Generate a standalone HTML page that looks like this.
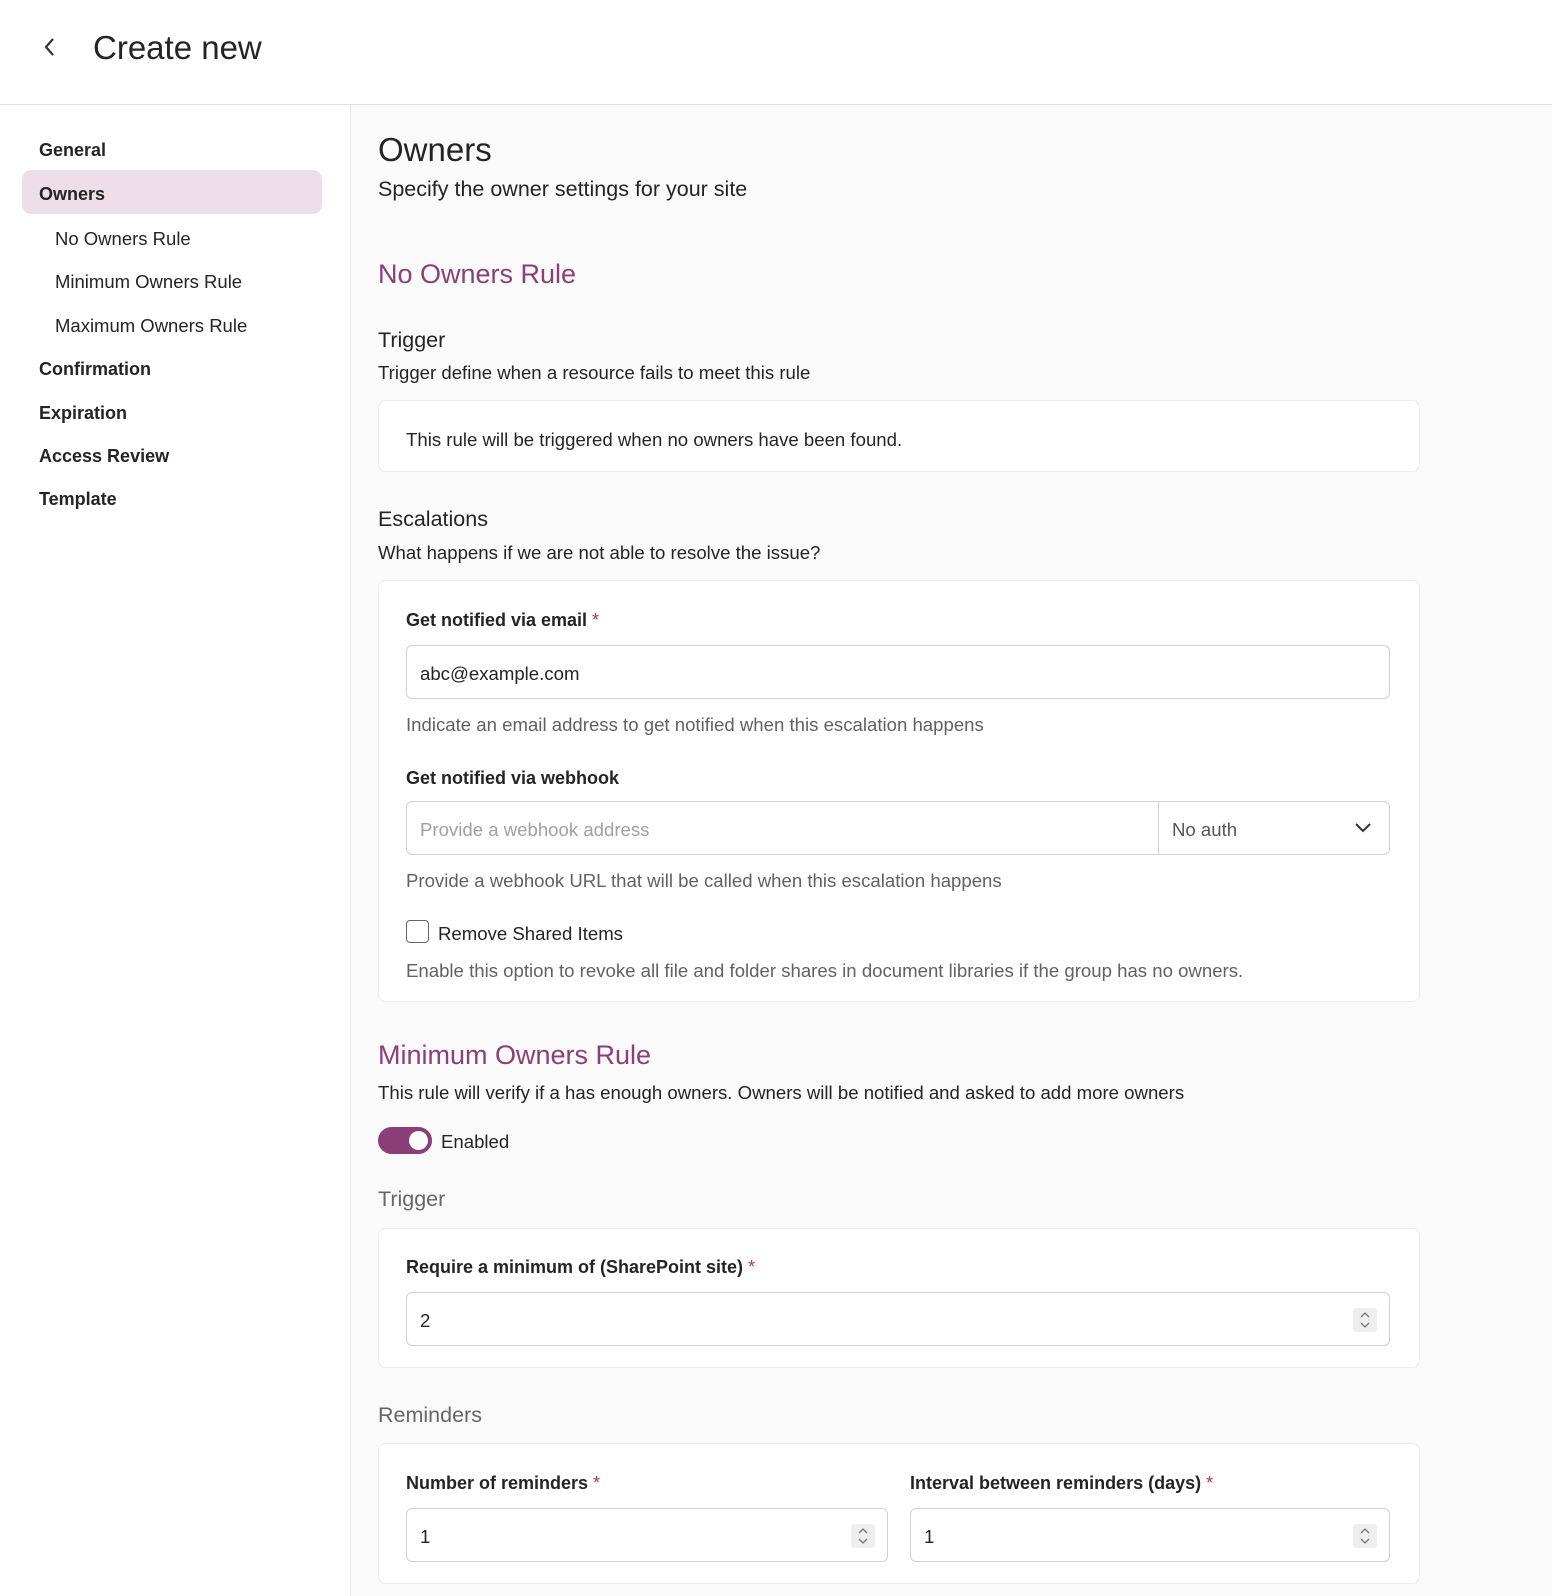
<!DOCTYPE html>
<html><head><style>
*{box-sizing:border-box;margin:0;padding:0}
body{width:1552px;height:1596px;overflow:hidden;background:#fafafa;font-family:"Liberation Sans",sans-serif;color:#242424;position:relative}
.a{position:absolute;white-space:nowrap}
.hdr{position:absolute;left:0;top:0;width:1552px;height:105px;background:#fff;border-bottom:1px solid #e0e0e0}
.side{position:absolute;left:0;top:105px;width:351px;height:1491px;background:#fff;border-right:1px solid #e6e6e6}
.nav{font-size:18px;font-weight:bold;left:39px}
.sub{font-size:18.5px;left:55px}
.card{position:absolute;left:378px;width:1042px;background:#fff;border:1px solid #ececec;border-radius:8px}
.inp{position:absolute;background:#fff;border:1px solid #d1d1d1;border-radius:6px;height:54px}
.lbl{font-size:18px;font-weight:bold}
.star{color:#c4314b;font-weight:normal}
.help{font-size:18.6px;color:#616161}
.t{font-size:18.6px}
.h2{font-size:27px;color:#8b3f78}
.spin{position:absolute;right:12px;top:15px;width:24px;height:24px;background:#eee;border-radius:3px}
</style></head><body>
<div class="hdr"></div>
<svg class="a" style="left:42px;top:36px" width="16" height="22"><path d="M11 3 L4 11 L11 19" stroke="#333" stroke-width="2.2" fill="none"/></svg>
<div class="a" style="left:93px;top:29px;font-size:33px;color:#242424">Create new</div>
<div class="side"></div>
<div class="a" style="left:22px;top:170px;width:300px;height:44px;background:#eedeea;border-radius:9px"></div>
<div class="a nav" style="top:140px">General</div>
<div class="a nav" style="top:184px">Owners</div>
<div class="a sub" style="top:228px">No Owners Rule</div>
<div class="a sub" style="top:271px">Minimum Owners Rule</div>
<div class="a sub" style="top:315px">Maximum Owners Rule</div>
<div class="a nav" style="top:359px">Confirmation</div>
<div class="a nav" style="top:403px">Expiration</div>
<div class="a nav" style="top:446px">Access Review</div>
<div class="a nav" style="top:489px">Template</div>

<div class="a" style="left:378px;top:131px;font-size:33px">Owners</div>
<div class="a" style="left:378px;top:177px;font-size:21.5px">Specify the owner settings for your site</div>
<div class="a h2" style="left:378px;top:259px">No Owners Rule</div>
<div class="a" style="left:378px;top:328px;font-size:21.5px">Trigger</div>
<div class="a t" style="left:378px;top:362px">Trigger define when a resource fails to meet this rule</div>
<div class="card" style="top:400px;height:72px"></div>
<div class="a t" style="left:406px;top:429px">This rule will be triggered when no owners have been found.</div>
<div class="a" style="left:378px;top:507px;font-size:21.5px">Escalations</div>
<div class="a t" style="left:378px;top:542px">What happens if we are not able to resolve the issue?</div>
<div class="card" style="top:580px;height:422px"></div>
<div class="a lbl" style="left:406px;top:610px">Get notified via email <span class="star">*</span></div>
<div class="inp" style="left:406px;top:645px;width:984px"><span class="a t" style="left:13px;top:17px">abc@example.com</span></div>
<div class="a help" style="left:406px;top:714px">Indicate an email address to get notified when this escalation happens</div>
<div class="a lbl" style="left:406px;top:768px">Get notified via webhook</div>
<div class="inp" style="left:406px;top:801px;width:984px"><span class="a t" style="left:13px;top:17px;color:#a0a0a0">Provide a webhook address</span><div class="a" style="left:751px;top:0;height:52px;border-left:1px solid #d1d1d1"></div><span class="a t" style="left:765px;top:17px;color:#555">No auth</span><svg class="a" style="left:947px;top:19px" width="18" height="14"><path d="M2 3 L9 10 L16 3" stroke="#333" stroke-width="2" fill="none"/></svg></div>
<div class="a help" style="left:406px;top:870px">Provide a webhook URL that will be called when this escalation happens</div>
<div class="a" style="left:406px;top:920px;width:23px;height:23px;border:1.5px solid #666;border-radius:4px;background:#fff"></div>
<div class="a t" style="left:438px;top:923px">Remove Shared Items</div>
<div class="a help" style="left:406px;top:960px">Enable this option to revoke all file and folder shares in document libraries if the group has no owners.</div>
<div class="a h2" style="left:378px;top:1040px">Minimum Owners Rule</div>
<div class="a t" style="left:378px;top:1082px">This rule will verify if a has enough owners. Owners will be notified and asked to add more owners</div>
<div class="a" style="left:378px;top:1127px;width:54px;height:27px;border-radius:14px;background:#8b3f78"></div>
<div class="a" style="left:409px;top:1131px;width:19px;height:19px;border-radius:50%;background:#fff"></div>
<div class="a t" style="left:441px;top:1131px">Enabled</div>
<div class="a" style="left:378px;top:1187px;font-size:21.5px;color:#666">Trigger</div>
<div class="card" style="top:1228px;height:140px"></div>
<div class="a lbl" style="left:406px;top:1257px">Require a minimum of (SharePoint site) <span class="star">*</span></div>
<div class="inp" style="left:406px;top:1292px;width:984px"><span class="a t" style="left:13px;top:17px">2</span><div class="spin"><svg width="24" height="24"><path d="M8 9 L12 5 L16 9 M8 15 L12 19 L16 15" stroke="#777" stroke-width="1.3" fill="none"/></svg></div></div>
<div class="a" style="left:378px;top:1403px;font-size:21.5px;color:#666">Reminders</div>
<div class="card" style="top:1443px;height:141px"></div>
<div class="a lbl" style="left:406px;top:1473px">Number of reminders <span class="star">*</span></div>
<div class="a lbl" style="left:910px;top:1473px">Interval between reminders (days) <span class="star">*</span></div>
<div class="inp" style="left:406px;top:1508px;width:482px"><span class="a t" style="left:13px;top:17px">1</span><div class="spin"><svg width="24" height="24"><path d="M8 9 L12 5 L16 9 M8 15 L12 19 L16 15" stroke="#777" stroke-width="1.3" fill="none"/></svg></div></div>
<div class="inp" style="left:910px;top:1508px;width:480px"><span class="a t" style="left:13px;top:17px">1</span><div class="spin"><svg width="24" height="24"><path d="M8 9 L12 5 L16 9 M8 15 L12 19 L16 15" stroke="#777" stroke-width="1.3" fill="none"/></svg></div></div>
</body></html>
